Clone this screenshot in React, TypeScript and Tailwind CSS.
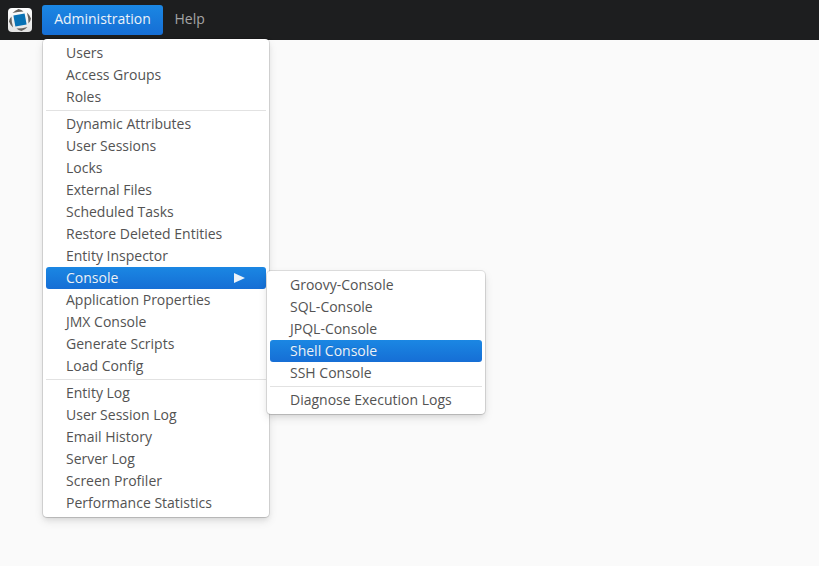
const groups = [
  ['Users', 'Access Groups', 'Roles'],
  ['Dynamic Attributes', 'User Sessions', 'Locks', 'External Files', 'Scheduled Tasks', 'Restore Deleted Entities', 'Entity Inspector', 'Console', 'Application Properties', 'JMX Console', 'Generate Scripts', 'Load Config'],
  ['Entity Log', 'User Session Log', 'Email History', 'Server Log', 'Screen Profiler', 'Performance Statistics'],
];
const consoleGroups = [
  ['Groovy-Console', 'SQL-Console', 'JPQL-Console', 'Shell Console', 'SSH Console'],
  ['Diagnose Execution Logs'],
];

function Menu({ items, selected, arrow }: { items: string[][]; selected: string; arrow?: boolean }) {
  return (
    <div className="rounded bg-white p-[3px] shadow-[0_4px_10px_rgba(0,0,0,0.1),0_3px_5px_rgba(0,0,0,0.05),0_1px_1px_rgba(0,0,0,0.08),0_0_0_1px_rgba(0,0,0,0.1)]">
      {items.map((group, i) => (
        <div key={i} className={i ? 'mt-[2px] border-t border-[#e2e2e2] pt-[2px]' : ''}>
          {group.map((label) => (
            <div
              key={label}
              className={
                'flex h-[22px] items-center justify-between rounded-[3px] pr-[21px] pl-5 whitespace-nowrap ' +
                (label === selected
                  ? 'bg-linear-to-b from-[#1b87e3] to-[#166ed5] text-[#ecf2f8] [text-shadow:0_-1px_0_rgba(0,0,0,0.1)]'
                  : 'text-[#535353]')
              }
            >
              <span>{label}</span>
              {arrow && label === selected && (
                <svg width="11" height="10" viewBox="0 0 11 10"><path d="M0 0L11 5L0 10Z" fill="#ecf2f8" /></svg>
              )}
            </div>
          ))}
        </div>
      ))}
    </div>
  );
}

export default function App() {
  return (
    <div className="h-[566px] w-[819px] overflow-hidden bg-[#fafafa] font-['Open_Sans',sans-serif] text-[14px] leading-[22px]">
      <header className="flex h-10 items-start bg-[#1d1e1f] pt-[5px] pl-2 text-[#a5a5a5]">
        <svg className="mt-[3px] mr-[10px]" width="24" height="24" viewBox="0 0 24 24">
          <defs>
            <linearGradient id="tile" x2="0" y2="1">
              <stop stopColor="#ffffff" />
              <stop offset="1" stopColor="#e2e2e2" />
            </linearGradient>
          </defs>
          <rect width="24" height="24" rx="4" fill="url(#tile)" />
          <g fill="#66635f">
            {[-10, 80, 170, 260].map((angle) => (
              <path key={angle} d="M5.8 3.9Q8.8 1.5 12.4 .9Q15.5 2 17 4.2Q11.5 3.2 5.8 3.9Z" transform={`rotate(${angle} 12 12)`} />
            ))}
          </g>
          <rect x="6.3" y="6.3" width="11.4" height="11.4" fill="#0872b5" transform="rotate(-10 12 12)" />
        </svg>
        <div className="flex h-[30px] w-[121px] items-center justify-center rounded-[3px] bg-linear-to-b from-[#1b87e3] to-[#166ed5] pb-[2px] text-[#ecf2f8]">Administration</div>
        <div className="flex h-7 items-center pl-[11.5px]">Help</div>
      </header>
      <div className="relative -mt-px ml-[43px] w-[226px]">
        <Menu items={groups} selected="Console" arrow />
        <div className="absolute top-[232px] left-[224px] w-[218px]">
          <Menu items={consoleGroups} selected="Shell Console" />
        </div>
      </div>
    </div>
  );
}
